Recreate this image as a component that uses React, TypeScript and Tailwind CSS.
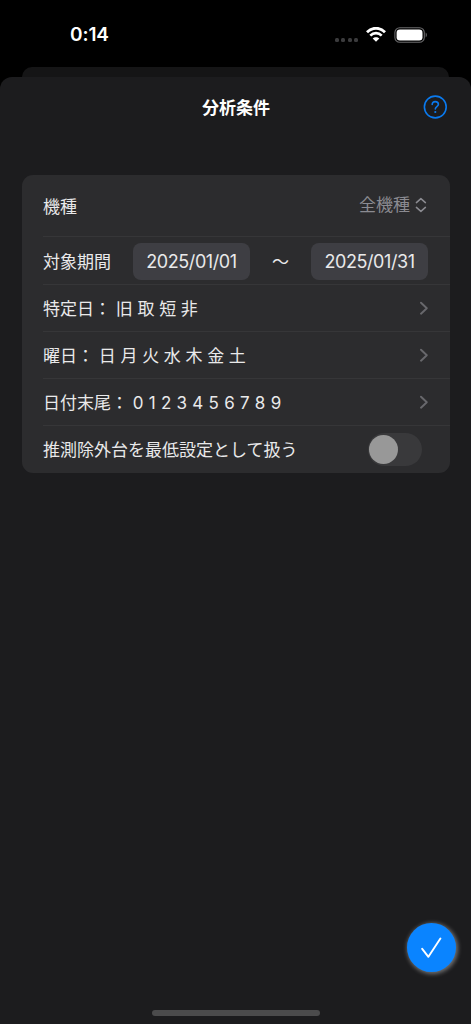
import type { ReactNode } from "react";

const details = [
  { label: "特定日：", value: "旧 取 短 非" },
  { label: "曜日：", value: "日 月 火 水 木 金 土" },
  { label: "日付末尾：", value: "0 1 2 3 4 5 6 7 8 9", digits: true },
];

function StatusBar() {
  return (
    <div className="flex h-[67px] items-start justify-between pl-[70px] pr-[43px]">
      <div className="mt-[22px] text-[19px] leading-[26px] font-semibold tracking-[-0.1px]">0:14</div>
      <div className="mt-[26px] flex h-[17px] items-center">
        <div className="mt-[10px] mr-[8px] flex gap-[2.5px]">
          {[0, 1, 2, 3].map((i) => (
            <span key={i} className="h-[4px] w-[4px] rounded-[1.5px] bg-[#3b3b3d]" />
          ))}
        </div>
        <svg className="-mt-[1px] mr-[8px] h-[15px] w-[20px]" viewBox="0 0 20 15" fill="none">
          <path d="M1 5.2C6-0.1 14-0.1 19 5.2" stroke="white" strokeWidth="2.8" />
          <path d="M4.3 8.6C7.5 5.3 12.5 5.3 15.7 8.6" stroke="white" strokeWidth="2.6" />
          <path d="M10 14.8 6.7 11.6C8.4 9.8 11.6 9.8 13.3 11.6Z" fill="white" />
        </svg>
        <svg className="h-[16px] w-[34px]" viewBox="0 0 34 16" fill="none">
          <rect x="0.9" y="0.7" width="29.4" height="14.6" rx="4.8" stroke="#69696b" strokeWidth="1.1" />
          <rect x="2.6" y="2.4" width="25.9" height="11.2" rx="3.3" fill="white" />
          <path d="M31.7 5.6C33.3 6.4 33.3 9.6 31.7 10.4Z" fill="#69696b" />
        </svg>
      </div>
    </div>
  );
}

function Row({ children, last }: { children: ReactNode; last?: boolean }) {
  return (
    <div className={last ? "flex h-[47px] items-center" : "flex h-[47.2px] items-center border-b border-[#363638]"}>
      {children}
    </div>
  );
}

function DateButton({ children }: { children: ReactNode }) {
  return (
    <button className="mt-[2px] h-[37px] w-[117px] rounded-[8px] bg-[#3e3e43] text-[18px] tracking-[-0.42px]">
      {children}
    </button>
  );
}

export default function App() {
  return (
    <div className="flex h-[1024px] w-[471px] flex-col overflow-hidden bg-black font-['Inter','Noto_Sans_CJK_JP',sans-serif] text-[17px] text-white">
      <StatusBar />

      {/* edge of the sheet behind */}
      <div className="mx-[22px] h-[10px] shrink-0 rounded-t-[10px] bg-[#151516]" />

      <main className="flex flex-1 flex-col rounded-t-[12px] bg-[#1c1c1e]">
        <header className="grid h-[60px] grid-cols-[1fr_auto_1fr] items-center pr-[24px] pl-[25px]">
          <h1 className="col-start-2 pt-[3px] text-[17px] font-bold">分析条件</h1>
          <svg className="h-[24px] w-[24px] justify-self-end" viewBox="0 0 24 24" fill="none" stroke="#0a7aef">
            <circle cx="12.3" cy="12" r="10.9" strokeWidth="1.6" />
            <path d="M9.2 9.5C9.2 7.7 10.3 6.6 12.2 6.6C14.1 6.6 15.4 7.7 15.4 9.3C15.4 11.7 12.3 11.6 12.3 14" strokeWidth="1.6" strokeLinecap="round" />
            <circle cx="12.3" cy="17" r="1.1" fill="#0a7aef" stroke="none" />
          </svg>
        </header>

        <section className="mt-[38px] mr-[21.5px] ml-[22px] h-[298px] rounded-[11px] bg-[#2c2c2e] pl-[21px] text-[#e9e9ea]">
          <div className="flex h-[62px] items-center justify-between border-b border-[#363638] pr-[22.5px]">
            <span className="pt-[4px]">機種</span>
            <div className="-mt-[3px] flex items-center gap-[5px] text-[#8b8b91]">
              <span className="pt-[4px]">全機種</span>
              <svg className="mt-[2px] h-[16px] w-[12px]" viewBox="0 0 12 16" fill="none" stroke="currentColor" strokeWidth="1.5" strokeLinecap="round" strokeLinejoin="round">
                <path d="M1.4 5.6 5.9 1.6 10.4 5.6M1.4 10.4 5.9 14.4 10.4 10.4" />
              </svg>
            </div>
          </div>

          <div className="flex h-[47.6px] items-center border-b border-[#363638]">
            <span className="w-[90px] pt-[5px]">対象期間</span>
            <DateButton>2025/01/01</DateButton>
            <span className="w-[61px] pt-[5px] text-center">〜</span>
            <DateButton>2025/01/31</DateButton>
          </div>

          {details.map(({ label, value, digits }) => (
            <Row key={label}>
              <span className="flex-1 pt-[4px] whitespace-pre">
                {label} <span className={digits ? "tracking-[0.24px]" : "tracking-[-0.05px]"}>{value}</span>
              </span>
              <svg className="mr-[21px] h-[14px] w-[9px]" viewBox="0 0 9 14" fill="none" stroke="#68686c" strokeWidth="1.9" strokeLinecap="round" strokeLinejoin="round">
                <path d="M1 1.7 6.8 7.2 1 12.7" />
              </svg>
            </Row>
          ))}

          <Row last>
            <span className="flex-1 pt-[3px]">推測除外台を最低設定として扱う</span>
            <span className="mr-[28px] flex h-[33px] w-[54px] items-center rounded-full bg-[#39393b] pl-[1.5px]">
              <span className="h-[29px] w-[29px] rounded-full bg-[#989898]" />
            </span>
          </Row>
        </section>

        <button className="mt-auto mr-[15px] flex h-[49px] w-[49px] items-center justify-center self-end rounded-full bg-[#0a84ff] shadow-[1px_1px_4px_1px_rgba(255,255,255,0.38)]">
          <svg className="h-[22px] w-[22px]" viewBox="0 0 22 22" fill="none" stroke="white" strokeWidth="1.9" strokeLinecap="round" strokeLinejoin="round">
            <path d="M1.2 11.8 7.4 19.8 19.4 1.6" />
          </svg>
        </button>
        <div className="mx-auto mt-[38px] mb-[8px] h-[6px] w-[168px] shrink-0 rounded-full bg-[#4b4b4c]" />
      </main>
    </div>
  );
}
